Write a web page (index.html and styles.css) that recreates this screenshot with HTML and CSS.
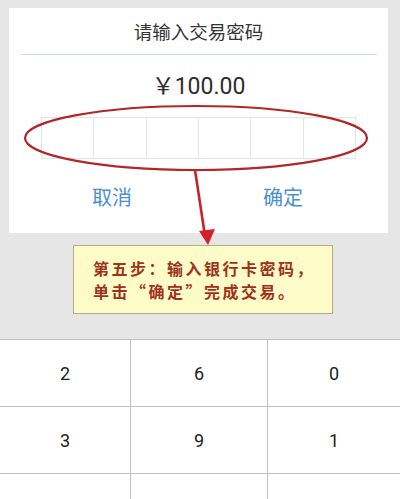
FILE: index.html
```html
<!DOCTYPE html>
<html lang="zh">
<head>
<meta charset="utf-8">
<link rel="stylesheet" href="styles.css">
</head>
<body>
<div class="page">
  <div class="card">
    <div class="title">请输入交易密码</div>
    <div class="divider"></div>
    <div class="amount">￥100.00</div>
    <div class="pwd">
      <span class="box"></span><span class="box"></span><span class="box"></span><span class="box"></span><span class="box"></span><span class="box"></span>
    </div>
    <div class="actions">
      <span class="btn">取消</span>
      <span class="btn">确定</span>
    </div>
  </div>
  <div class="note">
    <p>第五步：输入银行卡密码，</p>
    <p>单击“确定”完成交易。</p>
  </div>
  <div class="keypad">
    <div class="key">2</div><div class="key">6</div><div class="key">0</div>
    <div class="key">3</div><div class="key">9</div><div class="key">1</div>
    <div class="key"></div><div class="key"></div><div class="key"></div>
  </div>
  <svg class="annot" width="400" height="499" viewBox="0 0 400 499">
    <ellipse cx="196" cy="138" rx="171" ry="32" fill="none" stroke="#b3262a" stroke-width="2.2"/>
    <line x1="195" y1="170" x2="205" y2="236" stroke="#c8232a" stroke-width="2.6"/>
    <polygon points="199,231 215,229 208,245" fill="#d4202a"/>
  </svg>
</div>
</body>
</html>
```
FILE: styles.css
```css
html, body {
  margin: 0;
  padding: 0;
  background: #e6e6e6;
}
.page {
  position: relative;
  width: 400px;
  height: 499px;
  overflow: hidden;
  padding-top: 8px;
  box-sizing: border-box;
  font-family: Roboto, "Noto Sans CJK SC", sans-serif;
}
.card {
  margin-left: 9px;
  width: 379px;
  height: 225px;
  background: #ffffff;
  display: flex;
  flex-direction: column;
}
.title {
  height: 46px;
  display: flex;
  align-items: center;
  justify-content: center;
  font-size: 18.5px;
  color: #353535;
  font-family: "Noto Sans CJK SC", sans-serif;
}
.divider {
  height: 1px;
  margin: 0 11px;
  background: #cfdcdc;
}
.amount {
  height: 57px;
  display: flex;
  align-items: center;
  justify-content: center;
  font-size: 23px;
  color: #2e2e2e;
}
.pwd {
  margin: 5px 0 0 32px;
  display: flex;
  width: 315px;
  height: 42px;
}
.box {
  flex: 1;
  border: 1px solid #e4e4e4;
  border-right: none;
}
.box:last-child {
  border-right: 1px solid #e4e4e4;
}
.actions {
  flex: 1;
  display: flex;
  justify-content: space-between;
  align-items: center;
  padding: 0 85px 0 83px;
}
.btn {
  font-family: "Noto Sans CJK SC", sans-serif;
  font-size: 20px;
  color: #4a8fcf;
}
.note {
  margin: 12px 0 0 73px;
  width: 260px;
  height: 69px;
  box-sizing: border-box;
  background: #fdfbc8;
  border: 1px solid #b4ad8a;
  padding: 1px 0 0 19px;
  color: #a0321c;
  font-family: "Noto Sans CJK SC", sans-serif;
  font-weight: 700;
  font-size: 16px;
  letter-spacing: 2.5px;
}
.note p {
  margin: 0;
  line-height: 23px;
  white-space: nowrap;
}
.note p:first-child {
  margin-top: 10px;
}
.keypad {
  margin-top: 25px;
  border-top: 1px solid #c0c0c0;
  display: grid;
  grid-template-columns: 130px 136px 1fr;
  grid-auto-rows: 66px;
  gap: 1px;
  background: #c0c0c0;
}
.key {
  background: #ffffff;
  display: flex;
  align-items: center;
  justify-content: center;
  font-size: 18px;
  color: #222222;
}
.annot {
  position: absolute;
  left: 0;
  top: 0;
  pointer-events: none;
}
```
